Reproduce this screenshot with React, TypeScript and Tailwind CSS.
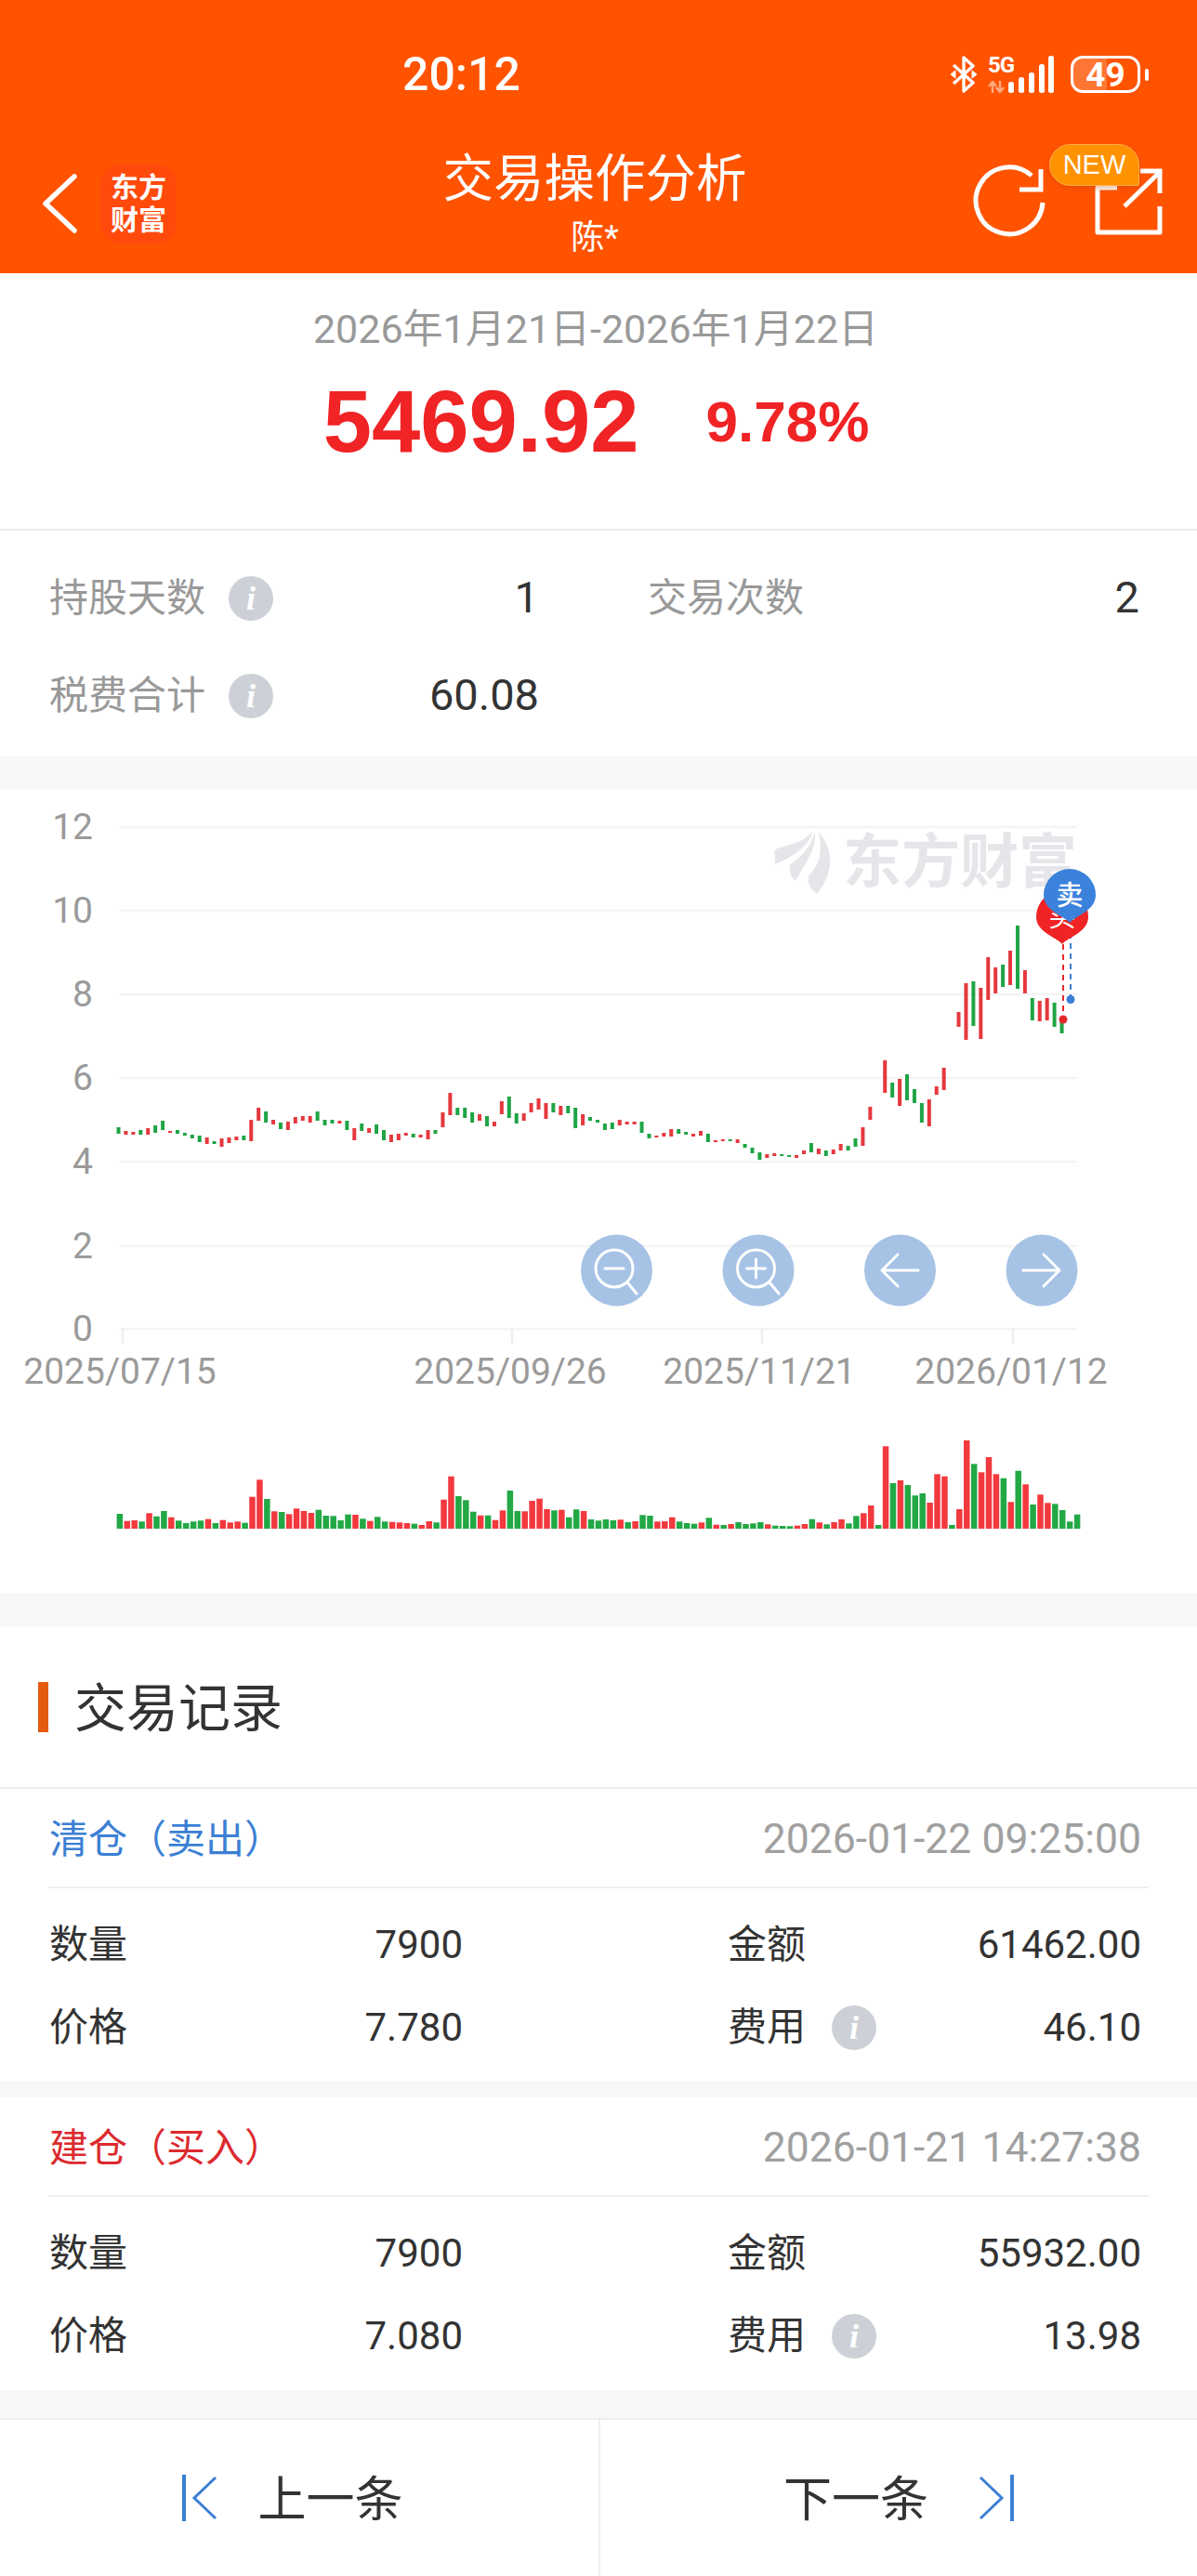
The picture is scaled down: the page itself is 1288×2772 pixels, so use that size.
import React from "react";

type Side = "r" | "g";
type Candle = [number, number, Side] | null;

const candles: Candle[] = [
  [1213, 1220, "g"], [1217, 1221, "r"], [1218, 1221, "r"], [1216, 1221, "g"], [1214, 1221, "r"],
  [1211, 1219, "g"], [1206, 1216, "g"], [1217, 1219, "r"], [1216, 1220, "g"], [1219, 1222, "g"],
  [1221, 1225, "g"], [1222, 1229, "g"], [1224, 1231, "r"], [1228, 1231, "g"], [1225, 1234, "r"],
  [1224, 1230, "r"], [1223, 1227, "r"], [1222, 1227, "g"], [1205, 1228, "r"], [1192, 1206, "r"],
  [1196, 1208, "g"], [1205, 1210, "r"], [1208, 1215, "g"], [1207, 1216, "r"], [1202, 1209, "r"],
  [1201, 1206, "r"], [1201, 1208, "r"], [1196, 1206, "g"], [1205, 1211, "g"], [1205, 1209, "g"],
  [1206, 1209, "r"], [1206, 1216, "g"], [1214, 1227, "r"], [1209, 1217, "g"], [1214, 1219, "r"],
  [1210, 1220, "g"], [1216, 1227, "g"], [1221, 1229, "r"], [1220, 1227, "r"], [1219, 1222, "r"],
  [1220, 1224, "g"], [1221, 1224, "r"], [1216, 1226, "r"], [1216, 1220, "g"], [1197, 1213, "r"],
  [1176, 1200, "r"], [1192, 1200, "g"], [1192, 1203, "g"], [1197, 1208, "g"], [1199, 1206, "r"],
  [1201, 1212, "g"], [1207, 1212, "r"], [1185, 1199, "r"], [1180, 1203, "g"], [1198, 1209, "g"],
  [1198, 1206, "r"], [1187, 1197, "r"], [1182, 1194, "r"], [1187, 1204, "r"], [1187, 1197, "g"],
  [1190, 1200, "r"], [1190, 1198, "g"], [1192, 1214, "g"], [1199, 1211, "r"], [1202, 1206, "g"],
  [1205, 1208, "g"], [1209, 1216, "g"], [1208, 1215, "g"], [1205, 1211, "r"], [1207, 1210, "r"],
  [1207, 1210, "r"], [1207, 1219, "g"], [1220, 1225, "g"], [1222, 1224, "r"], [1219, 1223, "r"],
  [1215, 1223, "r"], [1215, 1220, "g"], [1218, 1221, "g"], [1220, 1223, "r"], [1217, 1222, "r"],
  [1220, 1229, "g"], [1227, 1229, "r"], [1226, 1228, "r"], [1226, 1228, "g"], [1226, 1230, "r"],
  [1231, 1235, "g"], [1235, 1241, "g"], [1240, 1248, "g"], [1242, 1246, "r"], [1241, 1244, "r"],
  [1242, 1244, "g"], [1243, 1245, "g"], [1243, 1246, "r"], [1238, 1242, "r"], [1230, 1240, "g"],
  [1236, 1242, "r"], [1238, 1244, "g"], [1237, 1242, "r"], [1231, 1238, "r"], [1233, 1238, "g"],
  [1225, 1234, "g"], [1213, 1233, "r"], [1191, 1205, "r"], null, [1141, 1176, "r"],
  [1165, 1181, "g"], [1161, 1190, "r"], [1156, 1184, "g"], [1172, 1187, "g"], [1187, 1208, "g"],
  [1183, 1212, "r"], [1169, 1178, "r"], [1149, 1173, "r"], null, [1089, 1105, "r"],
  [1058, 1119, "r"], [1056, 1104, "g"], [1063, 1118, "r"], [1030, 1076, "r"], [1041, 1069, "r"],
  [1038, 1062, "g"], [1023, 1060, "r"], [996, 1064, "g"], [1044, 1069, "r"], [1074, 1098, "g"],
  [1077, 1099, "r"], [1074, 1098, "r"], [1079, 1105, "g"], [1096, 1112, "g"],
];

const volumes: [number, Side][] = [
  [16, "g"], [8.3, "r"], [9, "r"], [7.7, "g"], [16.7, "r"], [13.3, "g"], [19, "g"], [12.3, "r"], [8.7, "g"], [6, "g"],
  [7.7, "g"], [8.7, "g"], [10.3, "r"], [6, "g"], [9.3, "r"], [6.7, "r"], [7.7, "r"], [6.3, "g"], [34.3, "r"], [52.7, "r"],
  [32, "g"], [18.7, "r"], [18, "g"], [15.7, "r"], [21.7, "r"], [19, "r"], [17, "r"], [20.3, "g"], [14, "g"], [13.7, "g"],
  [9, "g"], [15.3, "g"], [15, "r"], [10.7, "g"], [8.3, "r"], [12.7, "g"], [7.7, "g"], [7.3, "r"], [6.7, "r"], [6, "r"],
  [5.3, "g"], [4, "r"], [8, "r"], [6.7, "g"], [31.3, "r"], [56.3, "r"], [35, "g"], [30.7, "g"], [18.3, "g"], [14.3, "r"],
  [14.3, "g"], [9.3, "r"], [19.7, "r"], [41, "g"], [19, "g"], [18.7, "r"], [30, "r"], [32.3, "r"], [21, "r"], [19.7, "g"],
  [20.3, "r"], [12.3, "g"], [20.7, "g"], [19, "r"], [10, "g"], [8.7, "g"], [10, "g"], [9, "g"], [9.7, "r"], [7, "g"],
  [8, "r"], [14.7, "g"], [14, "g"], [7.7, "r"], [8, "r"], [12.3, "r"], [7.7, "g"], [6, "g"], [5.3, "g"], [6.7, "r"],
  [11.7, "g"], [4.3, "r"], [4, "g"], [5, "r"], [7, "g"], [5, "g"], [5.7, "g"], [7, "g"], [4.7, "r"], [3.3, "g"],
  [3, "g"], [2.7, "g"], [3.3, "r"], [5, "r"], [10.3, "g"], [6.7, "r"], [4.7, "g"], [7, "r"], [10, "r"], [5.7, "g"],
  [13.7, "g"], [16.7, "r"], [25, "r"], [4, "g"], [88.7, "r"], [49, "g"], [52, "r"], [47, "g"], [35.7, "g"], [38, "g"],
  [28, "r"], [58.7, "r"], [56.3, "r"], [4, "g"], [21, "r"], [95, "r"], [69.7, "g"], [60.7, "r"], [77, "r"], [58.7, "r"],
  [54.3, "g"], [28.7, "r"], [62.3, "g"], [47.7, "r"], [26, "g"], [36.7, "r"], [27.7, "r"], [26.7, "g"], [20, "g"], [7.7, "g"],
  [15.3, "g"],
];

const gridLines = [
  { y: 890, label: "12" },
  { y: 980, label: "10" },
  { y: 1070, label: "8" },
  { y: 1160, label: "6" },
  { y: 1250, label: "4" },
  { y: 1341, label: "2" },
  { y: 1430, label: "0" },
];

const dateTicks = [
  { tick: 132, x: 129, label: "2025/07/15" },
  { tick: 551, x: 549, label: "2025/09/26" },
  { tick: 820, x: 817, label: "2025/11/21" },
  { tick: 1090, x: 1088, label: "2026/01/12" },
];

const records = [
  {
    title: "清仓（卖出）",
    titleColor: "text-[#3b7fd4]",
    time: "2026-01-22 09:25:00",
    qty: "7900",
    amount: "61462.00",
    price: "7.780",
    fee: "46.10",
  },
  {
    title: "建仓（买入）",
    titleColor: "text-[#dc2a2e]",
    time: "2026-01-21 14:27:38",
    qty: "7900",
    amount: "55932.00",
    price: "7.080",
    fee: "13.98",
  },
];

const InfoDot = () => (
  <span className="flex h-[48px] w-[48px] items-center justify-center rounded-full bg-[#cdd1d7] font-['Liberation_Serif',serif] text-[36px] font-bold italic leading-none text-white">
    i
  </span>
);

const StatusBar = () => (
  <div className="flex h-[40px] items-center justify-between pl-[433px] pr-[52px]">
    <span className="text-[50px] font-medium leading-[40px] text-white">20:12</span>
    <div className="flex items-center">
      <svg width="30" height="40" viewBox="0 0 30 40" fill="none" stroke="white" strokeWidth="3.4" strokeLinejoin="round">
        <path d="M4 10L25 29L15 38V2L25 11L4 30" />
        <path d="M1 20L6 16V24Z" fill="white" strokeWidth="1" />
        <path d="M29 20L24 16V24Z" fill="white" strokeWidth="1" />
      </svg>
      <div className="ml-[11px] flex w-[22px] flex-col">
        <span className="h-[20px] whitespace-nowrap text-[24px] font-bold leading-[20px] tracking-[-1px] text-white">5G</span>
        <svg className="mt-[7px]" width="18" height="13" viewBox="0 0 18 13" fill="none" stroke="white" strokeOpacity="0.5" strokeWidth="2.5">
          <path d="M5 13V2M1 6L5 1L9 6" />
          <path d="M13 0V11M9 7L13 12L17 7" />
        </svg>
      </div>
      <svg width="50" height="40" viewBox="0 0 50 40" fill="white">
        <rect x="0" y="28" width="6" height="12" rx="2.5" />
        <rect x="11" y="23" width="6" height="17" rx="2.5" />
        <rect x="22" y="18" width="6" height="22" rx="2.5" />
        <rect x="33" y="9" width="6" height="31" rx="2.5" />
        <rect x="43" y="0" width="6" height="40" rx="2.5" />
      </svg>
      <div className="relative ml-[17px] flex h-[40px] w-[75px] items-center justify-center overflow-hidden rounded-[13px] border-[3px] border-white">
        <div className="absolute inset-y-0 left-0 w-[36px] bg-white/20" />
        <span className="relative text-[37px] font-bold leading-none text-white">49</span>
      </div>
      <div className="ml-[5px] h-[13px] w-[4px] rounded-full bg-white" />
    </div>
  </div>
);

const TitleBar = () => (
  <div className="relative grid h-[144px] grid-cols-[1fr_auto_1fr]">
    <div className="flex h-[144px] items-center pb-[6px] pl-[46px]">
      <svg width="38" height="66" viewBox="0 0 38 66" fill="none" stroke="white" strokeWidth="5.5" strokeLinecap="round" strokeLinejoin="round">
        <path d="M34 4L3 33L34 62" />
      </svg>
      <div className="ml-[24px] flex h-[85px] w-[82px] flex-col items-center justify-center rounded-[20px] bg-[#ff4a0c] text-[30px] font-bold leading-[35px] text-white">
        <span>东方</span>
        <span>财富</span>
      </div>
    </div>
    <div className="flex flex-col items-center pr-[8px] pt-[12px] text-white">
      <span className="h-[60px] text-[54.5px] leading-[60px]">交易操作分析</span>
      <span className="mt-[16px] h-[36px] text-[36px] leading-[36px]">陈*</span>
    </div>
    <div className="flex justify-end pr-[36px] pt-[25px]">
      <svg width="205" height="80" viewBox="1045 175 205 80" fill="none" stroke="white" strokeWidth="5">
        <path d="M1120 218A36 36 0 1 1 1108 189" />
        <path d="M1118 182V204H1095" />
        <path d="M1200 202H1179V250H1246V222" strokeLinejoin="round" />
        <path d="M1208 222L1245 186" />
        <path d="M1225 184H1246V208" />
      </svg>
    </div>
    <div className="absolute right-[62px] top-[5px] flex h-[45px] w-[97px] items-center justify-center rounded-bl-[24px] rounded-br-[2px] rounded-tl-[24px] rounded-tr-[24px] border border-[#ffae4a] bg-[#ff9200] font-['Liberation_Sans',sans-serif] text-[29px] leading-none text-white shadow-[0_3px_6px_rgba(200,70,0,0.35)]">
      NEW
    </div>
  </div>
);

const Summary = () => (
  <section className="flex h-[277px] flex-col items-center border-b-2 border-[#eeeeee] pt-[36px]">
    <div className="h-[48px] pr-[6px] text-[43px] leading-[48px] text-[#999999]">2026年1月21日-2026年1月22日</div>
    <div className="mt-[31px] flex h-[90px] items-center gap-[72px] pr-[5px] font-['Liberation_Sans',sans-serif] font-bold text-[#f02325]">
      <span className="text-[94px] leading-[90px]">5469.92</span>
      <span className="text-[62px] leading-[90px]">9.78%</span>
    </div>
  </section>
);

const StatCell = ({ label, value, tip }: { label: string; value: string; tip?: boolean }) => (
  <div className="flex h-[105px] items-center justify-between text-[42px]">
    <div className="flex items-center gap-[25px] text-[#999999]">
      <span>{label}</span>
      {tip && <InfoDot />}
    </div>
    <span className="text-[47px] text-[#333333]">{value}</span>
  </div>
);

const Stats = () => (
  <section className="grid h-[243px] grid-cols-[527px_529px] content-start gap-x-[117px] pl-[53px] pt-[20px]">
    <StatCell label="持股天数" value="1" tip />
    <StatCell label="交易次数" value="2" />
    <StatCell label="税费合计" value="60.08" tip />
  </section>
);

const Chart = () => (
  <section className="bg-white">
    <svg className="block" width="1288" height="865" viewBox="0 850 1288 865">
      {/* watermark */}
      <g transform="translate(820 880) scale(0.3333)" fill="#e6e6ea">
        <path d="M40 105C70 85 125 90 162 45C155 85 110 115 85 130C65 140 50 148 42 150Z" />
        <path d="M170 45C180 100 130 160 108 205C95 195 85 170 92 150C125 125 160 95 170 45Z" />
        <path d="M182 45C240 110 225 190 177 245C150 225 145 205 152 185C190 150 195 100 182 45Z" />
      </g>
      <text x="907" y="949" fontSize="63" fontWeight="700" fill="#e6e6ea">东方财富</text>

      {gridLines.map((g) => (
        <g key={g.label}>
          <line x1="129" x2="1159" y1={g.y} y2={g.y} stroke="#f4f4f4" strokeWidth="2.5" />
          <text x="100" y={g.y + 13} textAnchor="end" fontSize="39" fill="#9a9a9a">{g.label}</text>
        </g>
      ))}
      {dateTicks.map((d) => (
        <g key={d.label}>
          <line x1={d.tick} x2={d.tick} y1="1430" y2="1446" stroke="#eeeeee" strokeWidth="2.5" />
          <text x={d.x} y="1489" textAnchor="middle" fontSize="39" fill="#9a9a9a">{d.label}</text>
        </g>
      ))}

      {candles.map((c, i) =>
        c ? (
          <rect key={i} x={125.5 + 7.93 * i} y={c[0]} width="4" height={c[1] - c[0]} fill={c[2] === "r" ? "#e5383e" : "#1fa446"} />
        ) : null
      )}

      {/* buy / sell markers */}
      <line x1="1144" x2="1144" y1="1016" y2="1097" stroke="#e8282c" strokeWidth="2" strokeDasharray="6 5" />
      <line x1="1152" x2="1152" y1="993" y2="1075" stroke="#3b7fd4" strokeWidth="2" strokeDasharray="6 5" />
      <circle cx="1144" cy="1097" r="4.5" fill="#e8282c" />
      <circle cx="1152" cy="1075.5" r="4.5" fill="#3b7fd4" />
      <path d="M1143 1016C1136 1008 1115 1003 1115 986.5A28 28 0 0 1 1171 986.5C1171 1003 1150 1008 1143 1016Z" fill="#f02325" />
      <text x="1143" y="997" textAnchor="middle" fontSize="29" fill="white">买</text>
      <path d="M1151 993C1144 985 1123 980 1123 963A28 28 0 0 1 1179 963C1179 980 1158 985 1151 993Z" fill="#3b82dc" />
      <text x="1151" y="974" textAnchor="middle" fontSize="29" fontWeight="500" fill="white">卖</text>

      {/* zoom and pan controls */}
      <g fill="none" stroke="white" strokeWidth="3" strokeLinecap="round" strokeLinejoin="round">
        <circle cx="663.5" cy="1367" r="38.5" fill="#a6c3e6" stroke="none" />
        <circle cx="661" cy="1365" r="20" />
        <path d="M651 1365H671M675 1380L685 1392" />
        <circle cx="816" cy="1367" r="38.5" fill="#a6c3e6" stroke="none" />
        <circle cx="813.5" cy="1365" r="20" />
        <path d="M803.5 1365H823.5M813.5 1355V1375M828 1380L838 1392" />
        <circle cx="968.5" cy="1367" r="38.5" fill="#a6c3e6" stroke="none" />
        <path d="M988 1367H949M966 1350L949 1367L966 1384" />
        <circle cx="1121" cy="1367" r="38.5" fill="#a6c3e6" stroke="none" />
        <path d="M1101 1367H1140M1123 1350L1140 1367L1123 1384" />
      </g>

      {volumes.map(([h, side], i) => (
        <rect key={i} x={125.6 + 7.925 * i} y={1645 - h} width="6.5" height={h} fill={side === "r" ? "#f2393e" : "#22a845"} />
      ))}
    </svg>
  </section>
);

const RecordRow = ({ label, value, tip }: { label: string; value: string; tip?: boolean }) => (
  <div className="flex h-[89px] items-center justify-between text-[42px] text-[#333333]">
    <div className="flex items-center gap-[28px]">
      <span>{label}</span>
      {tip && <InfoDot />}
    </div>
    <span>{value}</span>
  </div>
);

const RecordCard = ({ item }: { item: (typeof records)[number] }) => (
  <div className="h-[315px] bg-white">
    <div className="mx-[52px] flex h-[107px] items-center justify-between border-b-2 border-[#eeeeee] pl-[1px] pr-[8px] pt-[3px]">
      <span className={`text-[42px] ${item.titleColor}`}>{item.title}</span>
      <span className="text-[44.5px] text-[#a0a0a0]">{item.time}</span>
    </div>
    <div className="grid grid-cols-[445px_445px] gap-x-[285px] pl-[53px] pt-[16px]">
      <RecordRow label="数量" value={item.qty} />
      <RecordRow label="金额" value={item.amount} />
      <RecordRow label="价格" value={item.price} />
      <RecordRow label="费用" value={item.fee} tip />
    </div>
  </div>
);

const PagerIcon = ({ flip }: { flip?: boolean }) => (
  <svg className={flip ? "-scale-x-100" : ""} width="38" height="50" viewBox="0 0 38 50" fill="none" stroke="#3b7fd4">
    <path d="M2 0V50" strokeWidth="4" />
    <path d="M36 3L13 25L36 47" strokeWidth="3" />
  </svg>
);

const Pager = () => (
  <footer className="flex h-[170px] border-t-2 border-[#eeeeee] bg-white text-[52px] text-[#333333]">
    <div className="flex w-[644px] items-center justify-center gap-[43px] pr-[14px]">
      <PagerIcon />
      <span className="pt-[6px]">上一条</span>
    </div>
    <div className="flex flex-1 items-center justify-center gap-[54px] border-l-2 border-[#eeeeee]">
      <span className="pt-[6px]">下一条</span>
      <PagerIcon flip />
    </div>
  </footer>
);

export default function App() {
  return (
    <div className="flex min-h-[2772px] w-[1288px] flex-col bg-[#f7f7f8] font-['Roboto','Noto_Sans_CJK_SC',sans-serif]">
      <header className="h-[294px] bg-[#ff5300] pt-[60px]">
        <StatusBar />
        <div className="mt-[50px]">
          <TitleBar />
        </div>
      </header>
      <div className="bg-white">
        <Summary />
        <Stats />
      </div>
      <div className="h-[36px]" />
      <Chart />
      <div className="h-[35px]" />
      <section className="bg-white">
        <div className="flex h-[175px] items-center border-b-2 border-[#eeeeee] pl-[41px]">
          <span className="h-[54px] w-[11px] bg-[#e45c10]" />
          <h2 className="ml-[28px] pt-[5px] text-[56px] font-normal text-[#333333]">交易记录</h2>
        </div>
        <RecordCard item={records[0]} />
      </section>
      <div className="h-[17px]" />
      <RecordCard item={records[1]} />
      <div className="h-[30px]" />
      <Pager />
    </div>
  );
}
